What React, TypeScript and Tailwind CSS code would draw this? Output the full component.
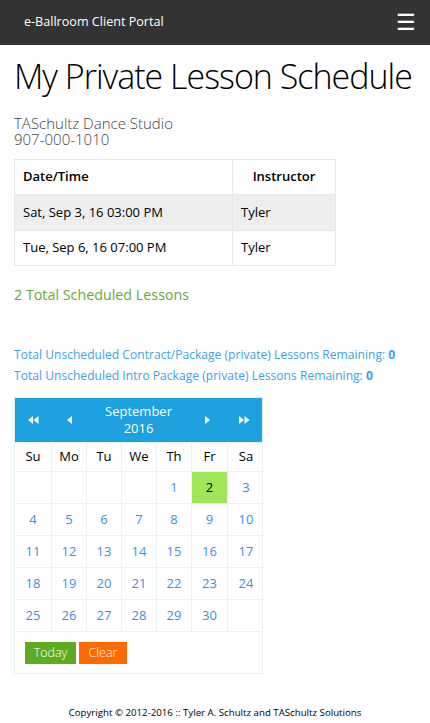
import React from "react";

const F = { fontFamily: '"Open Sans", "Noto Sans", sans-serif' };

function Arrow({ dir, double }: { dir: "l" | "r"; double?: boolean }) {
  const tri = (x: number) =>
    dir === "l" ? `${x + 5},0 ${x + 5},8 ${x},4` : `${x},0 ${x},8 ${x + 5},4`;
  return (
    <svg width={double ? 11 : 6} height={8} viewBox={`0 0 ${double ? 11 : 6} 8`}>
      <polygon points={tri(0)} fill="white" />
      {double && <polygon points={tri(5.5)} fill="white" />}
    </svg>
  );
}

export default function App() {
  const weeks: (number | null)[][] = [
    [null, null, null, null, 1, 2, 3],
    [4, 5, 6, 7, 8, 9, 10],
    [11, 12, 13, 14, 15, 16, 17],
    [18, 19, 20, 21, 22, 23, 24],
    [25, 26, 27, 28, 29, 30, null],
  ];
  const days = ["Su", "Mo", "Tu", "We", "Th", "Fr", "Sa"];
  const cols = "grid grid-cols-[37px_35px_35px_35px_35px_36px_36px]";
  return (
    <div style={F} className="min-h-[723px] bg-white text-[#333]">
      <div className="h-[45px] bg-[#333333] flex items-center justify-between pl-[24px] pr-[14px]">
        <span className="text-white text-[12.6px]">e-Ballroom Client Portal</span>
        <span className="text-white text-[22px] leading-none pb-[4px]">☰</span>
      </div>
      <div className="px-[14px]">
        <h1 className="text-[34px] tracking-[-1px] font-light text-black mt-[9px] leading-[44px] whitespace-nowrap">
          My Private Lesson Schedule
        </h1>
        <div className="mt-[17px] text-[15px] font-light leading-[16px] text-[#444]">
          <div>TASchultz Dance Studio</div>
          <div>907-000-1010</div>
        </div>
        <table className="mt-[12px] border-collapse text-[13px] text-black">
          <thead>
            <tr className="h-[35px]">
              <th className="w-[218px] border border-[#e6e6e6] text-left font-semibold pl-[8px]">Date/Time</th>
              <th className="w-[103px] border border-[#e6e6e6] text-center font-semibold">Instructor</th>
            </tr>
          </thead>
          <tbody>
            <tr className="h-[36px] bg-[#eeeeee]">
              <td className="border border-[#e6e6e6] pl-[8px]">Sat, Sep 3, 16 03:00 PM</td>
              <td className="border border-[#e6e6e6] pl-[8px]">Tyler</td>
            </tr>
            <tr className="h-[35px]">
              <td className="border border-[#e6e6e6] pl-[8px]">Tue, Sep 6, 16 07:00 PM</td>
              <td className="border border-[#e6e6e6] pl-[8px]">Tyler</td>
            </tr>
          </tbody>
        </table>
        <div className="mt-[19px] text-[14.3px] text-[#6aa83a] leading-[20px]">2 Total Scheduled Lessons</div>
        <div className="mt-[39px] text-[12.1px] text-[#3fa1e3] leading-[21px]">
          <div>
            Total Unscheduled Contract/Package (private) Lessons Remaining: <b>0</b>
          </div>
          <div>
            Total Unscheduled Intro Package (private) Lessons Remaining: <b>0</b>
          </div>
        </div>
        <div className="mt-[11px] w-[249px] border border-[#e6f2fa]">
          <div className="h-[44px] bg-[#1da1e0] text-white flex items-center">
            <div className="w-[37px] flex justify-center"><Arrow dir="l" double /></div>
            <div className="w-[35px] flex justify-center"><Arrow dir="l" /></div>
            <div className="flex-1 text-center text-[13px] leading-[17px]">
              <div>September</div>
              <div>2016</div>
            </div>
            <div className="w-[36px] flex justify-center"><Arrow dir="r" /></div>
            <div className="w-[36px] flex justify-center"><Arrow dir="r" double /></div>
          </div>
          <div className={cols}>
            {days.map((d, i) => (
              <div
                key={d}
                className={`h-[29px] flex items-center justify-center text-[13px] text-black border-t border-[#e6f2fa] ${i < 6 ? "border-r" : ""}`}
              >
                {d}
              </div>
            ))}
          </div>
          {weeks.map((w, wi) => (
            <div key={wi} className={cols}>
              {w.map((d, i) => (
                <div
                  key={i}
                  className={`h-[32px] flex items-center justify-center text-[13px] border-t border-[#e6f2fa] ${i < 6 ? "border-r" : ""} ${d === 2 ? "bg-[#9fe659] text-black" : "text-[#3e8fd5]"}`}
                >
                  {d ?? ""}
                </div>
              ))}
            </div>
          ))}
          <div className="border-t border-[#e6f2fa] h-[42px] flex items-start gap-[3px] pl-[10px] pt-[10px]">
            <button className="h-[22px] w-[51px] bg-[#5fab1f] text-white text-[12.5px] font-light">Today</button>
            <button className="h-[22px] w-[48px] bg-[#ff6a00] text-white text-[12.5px] font-light">Clear</button>
          </div>
        </div>
      </div>
      <div className="mt-[32px] text-center text-[9.7px] text-black">
        Copyright © 2012-2016 :: Tyler A. Schultz and TASchultz Solutions
      </div>
    </div>
  );
}
